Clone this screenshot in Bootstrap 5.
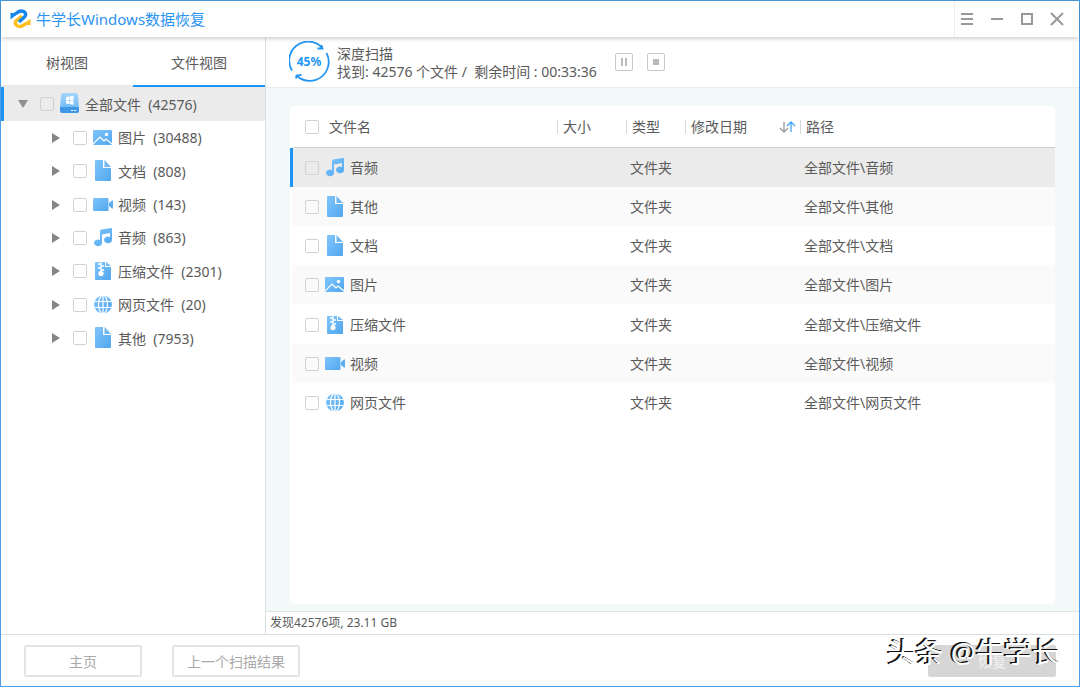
<!DOCTYPE html>
<html lang="zh-CN">
<head>
<meta charset="utf-8">
<meta name="viewport" content="width=device-width, initial-scale=1">
<title>牛学长Windows数据恢复</title>
<link href="https://cdn.jsdelivr.net/npm/bootstrap@5.3.0/dist/css/bootstrap.min.css" rel="stylesheet">
<style>
  body { font-family: "Noto Sans", "Noto Sans CJK SC", sans-serif; font-size: 14px; line-height: 18px; color: #5a5a5a; background: #fff; }
  .app { border: 1px solid #4a9fe8; }
  .titlebar { height: 36px; box-shadow: 0 1px 5px rgba(0,0,0,.25); z-index: 2; }
  .app-name { color: #2a94f0; font-size: 15px; }
  .win-tools { border-left: 1px solid #eee; padding: 0 14px 0 4px; gap: 14px; }
  .win-tools .btn { width: 16px; line-height: 0; }
  .side { width: 265px; border-right: 1px solid #dcdfe0; border-bottom: 1px solid #d9dfe0; }
  .tabs { height: 50px; }
  .tabs .btn { color: #5a5a5a; font-size: 14px; line-height: 18px; border-bottom: 2px solid #eaeaea; }
  .tabs .btn.active { color: #5a5a5a; border-bottom-color: #1e94f4; }
  .tree-root { height: 34px; background: #ebebeb; border-left: 3px solid #1e94f4; padding-left: 14px; }
  .tree-list { display: grid; grid-auto-rows: 1fr; height: 234px; }
  .tree-list li { padding-left: 50px; }
  .tick { appearance: none; width: 14px; height: 14px; border: 1px solid #d2d2d2; border-radius: 2px; background: transparent; margin: 0 6px 0 0; flex: none; }
  .tick:checked { background: #1e94f4; }
  .twist { width: 10px; height: 10px; flex: none; margin-right: 12px; }
  .ico { width: 20px; height: 22px; flex: none; margin-right: 5px; }
  .caption-text { padding-top: 1px; }
  .scan { height: 51px; border-bottom: 1px solid #e8eeee; background: #fff; padding-left: 23px; }
  .scan-text { margin: 1px 18px 0 6px; }
  .work { background: #f3f9f9; }
  .mini { width: 18px; height: 18px; border: 1px solid #c8c8c8; border-radius: 2px; margin-right: 14px; }
  .sheet { background: #fff; border-radius: 5px; margin: 18px 24px 7px; }
  .files { table-layout: fixed; width: 100%; }
  .files th { font-weight: 400; height: 41px; padding: 2px 0 0; border-bottom: 1px solid #cfcfcf; }
  .files td { height: 39px; padding: 1px 0 0; }
  .files tr:nth-child(4n+1) td { height: 40px; }
  .files tbody tr:nth-child(even) { background: #fafafa; }
  .files tbody tr.picked { background: #ebebeb; }
  .files .pick { border-left: 3px solid transparent; padding-left: 12px; }
  .files th .tick { margin-right: 10px; }
  .picked .pick { border-left-color: #1e94f4; }
  .colhead { border-left: 1px solid #d8d8d8; height: 14px; line-height: 14px; padding-left: 5px; }
  .files td.kind, .files td.path { padding-left: 4px; }
  .col-size { width: 69px; }
  .col-kind { width: 59px; }
  .col-date { width: 115px; }
  .col-path { width: 255px; }
  .status { height: 24px; border-top: 1px solid #dfe5e6; border-bottom: 1px solid #d9dfe0; font-size: 12px; background: #fff; padding-left: 4px; }
  .foot { height: 51px; padding: 0 23px; gap: 30px; }
  .foot .btn { height: 32px; font-size: 14px; line-height: 18px; border-radius: 2px; padding: 2px 0 0; }
  .ghost { border: 2px solid #e4e4e4; color: #aaa; }
  .restore { width: 128px; background: #d6d6d6; color: #f2f2f2; }
  .w-home { width: 118px; }
  .w-last { width: 128px; }
  .stamp { right: 19px; bottom: 16px; font-size: 28px; line-height: 36px; color: #fff; text-shadow: -1px -1px 0 #111, -2px -1px 0 #111; pointer-events: none; }
</style>
</head>
<body>
<svg width="0" height="0" class="position-absolute" aria-hidden="true">
  <defs>
    <linearGradient id="sky" x1="0" y1="0" x2="1" y2="1"><stop offset="0" stop-color="#80c5fd"/><stop offset="1" stop-color="#51a7ee"/></linearGradient>
    <linearGradient id="disk" x1="0" y1="0" x2="0" y2="1"><stop offset="0" stop-color="#a5d6fc"/><stop offset="1" stop-color="#6cb9f7"/></linearGradient>
    <symbol id="i-doc" viewBox="0 0 20 22"><path fill="url(#sky)" d="M3 0h7v8h8v12a1 1 0 0 1-1 1H3a1 1 0 0 1-1-1V1a1 1 0 0 1 1-1z"/><path fill="#6fb8f5" d="M11.500 0l6.500 7h-6.500z"/></symbol>
    <symbol id="i-zip" viewBox="0 0 20 22"><path fill="url(#sky)" d="M3 2h9v5h6v12a1 1 0 0 1-1 1H3a1 1 0 0 1-1-1V3a1 1 0 0 1 1-1z"/><path fill="#6fb8f5" d="M13 2l5 4h-5z"/><path stroke="#fff" stroke-width="1.300" d="M8 2v10M5 4h3M8 6h3M5 8h3M8 10h3"/><circle cx="8" cy="13.500" r="2.600" fill="#fff"/></symbol>
    <symbol id="i-pic" viewBox="0 0 20 22"><rect x="0" y="3" width="19" height="15" rx="1" fill="url(#sky)"/><path d="M0 17l7-7 4 4 2-2 6 5" fill="none" stroke="#fff" stroke-width="1.200"/><circle cx="13.500" cy="7.500" r="1.700" fill="#fff"/></symbol>
    <symbol id="i-vid" viewBox="0 0 20 22"><rect x="0" y="4" width="15.500" height="13" rx="1" fill="url(#sky)"/><path fill="#5badf0" d="M16 9l3-2.500a.6.600 0 0 1 1 .5v7a.6.600 0 0 1-1 .5L16 12z"/></symbol>
    <symbol id="i-mus" viewBox="0 0 20 22"><path fill="url(#sky)" d="M7 4a1.500 1.500 0 0 1 1.200-1.400L18 1.100a.9.900 0 0 1 1 .9V13a4 3.400 0 1 1-2-3V6L9 7.500V16a4 3.400 0 1 1-2-3z"/></symbol>
    <symbol id="i-web" viewBox="0 0 20 22"><circle cx="10" cy="10.500" r="9" fill="url(#sky)"/><g fill="none" stroke="#fff" stroke-width="1.200"><ellipse cx="10" cy="10.500" rx="4.500" ry="9"/><path d="M10 1.500v18M1.500 7.500h17M1.500 13.500h17"/></g></symbol>
    <symbol id="i-right" viewBox="0 0 10 10"><path fill="#858585" d="M1 0l8 5-8 5z"/></symbol>
  </defs>
</svg>

<div class="app min-vh-100 d-flex flex-column position-relative">
  <header class="titlebar d-flex align-items-stretch bg-white position-relative">
    <div class="d-flex align-items-center gap-1 ps-2 flex-grow-1">
      <svg width="23" height="20" viewBox="0 0 23 20" aria-hidden="true"><g fill="none" stroke-width="3.400"><path stroke="#ffc01f" stroke-linejoin="round" d="M13 7L7.500 11.500c-3 3 0 6 3.500 6 4 0 5-4 9-3.500"/><path stroke="#1687ea" stroke-linejoin="round" d="M3 6c4 .5 5-4 9-4 4 0 6 3 3.500 6L10 13"/></g><path fill="#ffc01f" d="M21.500 9.500v7l-6-2z"/><path fill="#1687ea" d="M1.500 3.500v7l6-5z"/></svg>
      <span class="app-name">牛学长Windows数据恢复</span>
    </div>
    <div class="win-tools d-flex align-items-center">
      <button class="btn p-0 border-0" aria-label="菜单"><svg width="14" height="14" stroke="#999" stroke-width="2"><path d="M1 2h12M1 7h12M1 12h12"/></svg></button>
      <button class="btn p-0 border-0" aria-label="最小化"><svg width="14" height="14" stroke="#999" stroke-width="2"><path d="M1 7h12"/></svg></button>
      <button class="btn p-0 border-0" aria-label="最大化"><svg width="14" height="14" stroke="#999" stroke-width="2" fill="none"><path d="M2 2h10v10H2z"/></svg></button>
      <button class="btn p-0 border-0" aria-label="关闭"><svg width="14" height="14" stroke="#999" stroke-width="2"><path d="M1 1l12 12M13 1L1 13"/></svg></button>
    </div>
  </header>

  <div class="d-flex flex-grow-1">
    <aside class="side flex-shrink-0">
      <div class="tabs d-flex">
        <button class="btn rounded-0 border-start-0 border-end-0 border-top-0 p-0 pt-1 w-50">树视图</button>
        <button class="btn rounded-0 border-start-0 border-end-0 border-top-0 p-0 pt-1 w-50 active">文件视图</button>
      </div>
      <div class="tree-root d-flex align-items-center">
        <svg class="twist" viewBox="0 0 10 10"><path fill="#909090" d="M0 1h10L5 9z"/></svg>
        <label class="d-flex align-items-center"><input type="checkbox" class="tick">
          <svg class="ico" viewBox="0 0 20 22"><path fill="url(#disk)" d="M3 0h13a2 2 0 0 1 2 2l1 14H0L1 2a2 2 0 0 1 2-2z"/><path fill="#3f98e6" d="M0 14h19v4a2 2 0 0 1-2 2H2a2 2 0 0 1-2-2z"/><path fill="#fff" d="M6 4l3-.5V7H6zM9.500 3.400l4-.6V7h-4zM6 7.500h3V11l-3-.5zM9.500 7.500h4v4.200l-4-.6z"/><path stroke="#fff" stroke-width="1.200" d="M11 17.500h2M14 17.500h2"/></svg>
          <span class="caption-text">全部文件&nbsp; (42576)</span></label>
      </div>
      <ul class="tree-list list-unstyled m-0" id="tree"></ul>
    </aside>

    <main class="work flex-grow-1 d-flex flex-column">
      <section class="scan d-flex align-items-center">
        <svg width="42" height="42" viewBox="0 0 42 42" class="flex-shrink-0"><g fill="none" stroke="#2496f2" stroke-width="1.800"><path d="M3 29.500A19 19 0 0 1 32.500 6M28.500 7.500l5 0-1-3.500M37.500 12A19 19 0 0 1 8 35M7 37.500l.5-3 5-.7"/></g><text x="20" y="25" text-anchor="middle" font-size="12" font-weight="700" fill="#2496f2">45%</text></svg>
        <div class="scan-text"><div>深度扫描</div><div>找到: 42576 个文件 /&nbsp; 剩余时间 : 00:33:36</div></div>
        <button class="btn mini p-0 d-flex align-items-center justify-content-center" aria-label="暂停"><svg width="8" height="8" fill="#bbb"><path d="M1 0h2v8H1zM5 0h2v8H5z"/></svg></button>
        <button class="btn mini p-0 d-flex align-items-center justify-content-center" aria-label="停止"><svg width="6" height="6" fill="#bbb"><path d="M0 0h6v6H0z"/></svg></button>
      </section>
      <section class="sheet flex-grow-1">
        <table class="files">
          <colgroup><col><col class="col-size"><col class="col-kind"><col class="col-date"><col class="col-path"></colgroup>
          <thead><tr>
            <th class="pick"><label class="d-flex align-items-center"><input type="checkbox" class="tick">文件名</label></th>
            <th><div class="colhead">大小</div></th>
            <th><div class="colhead">类型</div></th>
            <th><div class="colhead d-flex justify-content-between">修改日期<svg width="22" height="14" fill="none" stroke-width="1.300"><path stroke="#999" d="M6 2v9M2 8l4 4 4-4"/><path stroke="#42a5f5" d="M13 12V3M9 6l4-4 4 4"/></svg></div></th>
            <th><div class="colhead">路径</div></th>
          </tr></thead>
          <tbody id="rows"></tbody>
        </table>
      </section>
      <div class="status d-flex align-items-center">发现42576项, 23.11 GB</div>
    </main>
  </div>

  <footer class="foot d-flex align-items-center">
    <button class="btn ghost w-home">主页</button>
    <button class="btn ghost w-last">上一个扫描结果</button>
    <button class="btn restore border-0 ms-auto">恢复</button>
  </footer>
  <div class="stamp position-absolute">头条 @牛学长</div>
</div>

<script src="https://cdn.jsdelivr.net/npm/bootstrap@5.3.0/dist/js/bootstrap.bundle.min.js"></script>
<script>
  const icon = id => `<svg class="ico"><use href="#i-${id}"/></svg>`;
  const tree = [["图片","pic",30488],["文档","doc",808],["视频","vid",143],["音频","mus",863],["压缩文件","zip",2301],["网页文件","web",20],["其他","doc",7953]];
  document.getElementById("tree").innerHTML = tree.map(([n, i, c]) =>
    `<li class="d-flex align-items-center"><svg class="twist"><use href="#i-right"/></svg><label class="d-flex align-items-center"><input type="checkbox" class="tick">${icon(i)}<span class="caption-text">${n}&nbsp; (${c})</span></label></li>`).join("");
  const rows = [["音频","mus"],["其他","doc"],["文档","doc"],["图片","pic"],["压缩文件","zip"],["视频","vid"],["网页文件","web"]];
  document.getElementById("rows").innerHTML = rows.map(([n, i], k) =>
    `<tr class="${k ? "" : "picked"}"><td class="pick"><label class="d-flex align-items-center"><input type="checkbox" class="tick">${icon(i)}<span>${n}</span></label></td><td></td><td class="kind">文件夹</td><td></td><td class="path">全部文件\\${n}</td></tr>`).join("");
</script>
</body>
</html>
